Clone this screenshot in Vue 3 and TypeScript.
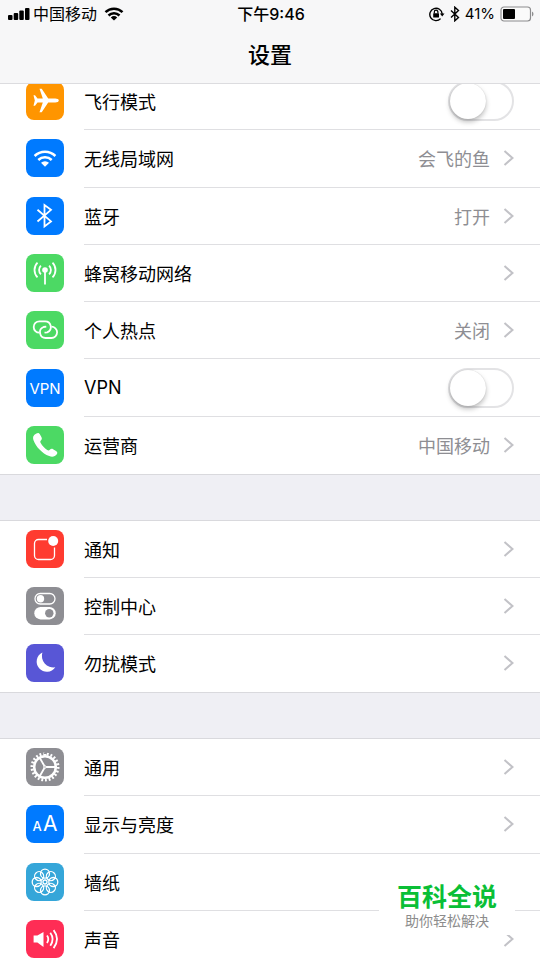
<script setup lang="ts">
import { ref } from 'vue'

interface Item {
  id: string
  label: string
  color: string
  value?: string
  toggle?: boolean
}

const groups: Item[][] = [
  [
    { id: 'plane', label: '飞行模式', color: 'orange', toggle: true },
    { id: 'wifi', label: '无线局域网', color: 'blue', value: '会飞的鱼' },
    { id: 'bluetooth', label: '蓝牙', color: 'blue', value: '打开' },
    { id: 'cellular', label: '蜂窝移动网络', color: 'green' },
    { id: 'hotspot', label: '个人热点', color: 'green', value: '关闭' },
    { id: 'vpn', label: 'VPN', color: 'blue', toggle: true },
    { id: 'phone', label: '运营商', color: 'green', value: '中国移动' },
  ],
  [
    { id: 'notify', label: '通知', color: 'red' },
    { id: 'control', label: '控制中心', color: 'gray' },
    { id: 'moon', label: '勿扰模式', color: 'indigo' },
  ],
  [
    { id: 'gear', label: '通用', color: 'gray' },
    { id: 'display', label: '显示与亮度', color: 'blue' },
    { id: 'wallpaper', label: '墙纸', color: 'cyan' },
    { id: 'sound', label: '声音', color: 'pink' },
  ],
]

const switches = ref<Record<string, boolean>>({ plane: false, vpn: false })
const petals = [0, 45, 90, 135, 180, 225, 270, 315]
</script>

<template>
  <div class="screen">
    <header class="header">
      <div class="status">
        <div class="status-left">
          <svg class="signal" viewBox="0 0 22 14" width="22" height="14" aria-hidden="true">
            <rect x="0" y="8" width="4.500" height="5" rx="1" />
            <rect x="5.700" y="6" width="4.500" height="7" rx="1" />
            <rect x="11.300" y="3.500" width="4.500" height="9.500" rx="1" />
            <rect x="17" y="1" width="4.500" height="12" rx="1" />
          </svg>
          <span>中国移动</span>
          <svg class="status-wifi" viewBox="0 0 20 14" width="20" height="14" aria-hidden="true">
            <path d="M1.500 5.200a12.200 12.200 0 0 1 17 0M4.500 8.500a8 8 0 0 1 11 0" fill="none" stroke="#000" stroke-width="2.500" />
            <path d="M6.800 10.400a4.700 4.700 0 0 1 6.400 0L10 13.600z" />
          </svg>
        </div>
        <time class="time">下午9:46</time>
        <div class="status-right">
          <svg class="status-lock" viewBox="0 0 16 16" width="16" height="16" aria-hidden="true">
            <path d="M11.600 12.600A6.200 6.200 0 1 1 13.200 8" fill="none" stroke="#000" stroke-width="1.400" />
            <path d="M10.900 7.400h4.600l-2.300 3.200z" />
            <rect x="4.200" y="7.200" width="5.800" height="4.300" rx=".6" />
            <path d="M5.300 7.500V6a1.800 1.800 0 0 1 3.600 0v1.500" fill="none" stroke="#000" stroke-width="1.200" />
          </svg>
          <svg viewBox="0 0 10 16" width="10" height="16" aria-hidden="true">
            <path d="M1 4.500l7.500 7-3.700 3.300V1.200l3.700 3.300-7.500 7" fill="none" stroke="#000" stroke-width="1.400" />
          </svg>
          <span class="percent">41%</span>
          <svg viewBox="0 0 34 16" width="34" height="16" aria-hidden="true">
            <rect x="1" y="1" width="29.500" height="14" rx="3" fill="#fafafa" stroke="#8c8c8e" stroke-width="1.200" />
            <rect x="3" y="3" width="12" height="10" rx="1" />
            <path d="M32 5.500v5q1.500-.8 1.500-2.500T32 5.500z" fill="#8c8c8e" />
          </svg>
        </div>
      </div>
      <h1 class="title">设置</h1>
    </header>

    <main class="content">
      <div class="list">
        <section v-for="(group, g) in groups" :key="g" class="group" :class="'rows-' + group.length">
          <component
            :is="item.toggle ? 'label' : 'a'"
            v-for="item in group"
            :key="item.id"
            class="row"
            :href="item.toggle ? undefined : '#' + item.id"
            :for="item.toggle ? 'switch-' + item.id : undefined"
          >
            <svg class="icon" :class="item.color" viewBox="0 0 38 38" aria-hidden="true">
              <path
                v-if="item.id === 'plane'"
                class="solid"
                d="M32.800 18.500c0 1.200-1.600 1.900-3.600 1.900h-7L15.700 30.200h-2.200l3.300-9.800h-5.300l-2.500 3.400H7.500l1.300-5.300-1.300-5.300H9l2.500 3.400h5.300L13.500 6.800h2.200l6.500 9.800h7c2 0 3.600.7 3.600 1.900z"
              />
              <g v-else-if="item.id === 'wifi'">
                <path class="line thick" d="M8.600 17a15 15 0 0 1 20.800 0M12.300 21a9.600 9.600 0 0 1 13.400 0" />
                <path class="solid" d="M15 23.800a5.700 5.700 0 0 1 8 0l-4 4z" />
              </g>
              <path
                v-else-if="item.id === 'bluetooth'"
                class="line mid"
                d="M11.500 12.800l13.500 11.600-6.500 5V8l6.500 4.900-13.500 11.600"
              />
              <g v-else-if="item.id === 'cellular'">
                <circle class="solid" cx="19" cy="16" r="2.800" />
                <path class="line mid" d="M19 17v13.500M14.900 11.700a6 6 0 0 0 0 8.600M23.100 11.700a6 6 0 0 1 0 8.600M11.500 8.700a10.400 10.400 0 0 0 0 14.600M26.500 8.700a10.400 10.400 0 0 1 0 14.600" />
              </g>
              <g v-else-if="item.id === 'hotspot'" class="line mid">
                <path d="M13.400 21.700a5.700 5.700 0 0 1 0-11.400h5.600a5.700 5.700 0 0 1 2.200 11l-2.700.4" />
                <path d="M25.400 15.600a5.700 5.700 0 0 1 0 11.400h-5.600a5.700 5.700 0 0 1-2.200-11l2.700-.4" />
              </g>
              <text v-else-if="item.id === 'vpn'" class="vpn-text" x="19" y="24.500" text-anchor="middle">VPN</text>
              <path
                v-else-if="item.id === 'phone'"
                class="solid"
                d="M10.400 7.600c1.600-1.100 2.700-.6 3.600.9l1.500 2.800c.7 1.300.3 2.300-.6 3.200-.8.8-.7 1.600-.2 2.500 1.500 2.700 3.700 5 6.500 6.900 1 .6 1.800.8 2.600-.1 1-1.100 2-1.400 3.300-.6l2.900 1.700c1.400.9 1.800 1.900.8 3.300-1.700 2.400-4.400 3.200-7.600 1.900C16.100 27.300 9.900 21 7.400 14c-.9-2.700-.2-4.900 3-6.400z"
              />
              <g v-else-if="item.id === 'notify'">
                <path class="line fine" d="M21 9.500h-8.500a4 4 0 0 0-4 4v12a4 4 0 0 0 4 4h12a4 4 0 0 0 4-4v-8" />
                <circle class="solid" cx="27.200" cy="11" r="5" />
              </g>
              <g v-else-if="item.id === 'control'">
                <rect class="line fine" x="9" y="6.500" width="20" height="10.500" rx="5.250" />
                <circle class="solid" cx="14.500" cy="11.750" r="3.700" />
                <rect class="solid" x="8.300" y="20" width="21.400" height="12.400" rx="6.200" />
                <circle class="dot" cx="23.300" cy="26.200" r="4.200" />
              </g>
              <path
                v-else-if="item.id === 'moon'"
                class="solid"
                d="M16.400 8.400a11.600 11.600 0 0 0 12.900 14.900A10.200 10.200 0 1 1 16.400 8.400z"
              />
              <g v-else-if="item.id === 'gear'" class="line">
                <circle class="teeth" cx="19" cy="19" r="13" pathLength="44" />
                <circle class="thick" cx="19" cy="19" r="10.800" />
                <path class="mid" d="M19 19h11M19 19l-5.600-9.700M19 19l-5.600 9.700" />
                <circle class="hub" cx="19" cy="19" r="1.200" />
              </g>
              <g v-else-if="item.id === 'display'" class="display-text">
                <text class="small-a" x="6.500" y="25.500">A</text>
                <text class="big-a" x="17" y="25.500">A</text>
              </g>
              <g v-else-if="item.id === 'wallpaper'" class="line fine">
                <circle
                  v-for="angle in petals"
                  :key="angle"
                  cx="19"
                  cy="10.700"
                  r="4.500"
                  :transform="`rotate(${angle} 19 19)`"
                />
                <circle cx="19" cy="19" r="2" />
              </g>
              <g v-else>
                <path class="solid" d="M7.600 15.500h3.800L17.500 12v15l-6.100-4.500H7.600z" />
                <path class="line mid" d="M21 15.500q2.600 3.500 0 7.500M24.300 12.700q4.600 6.300 0 13M27.600 10.100q6.800 8.800 0 18" />
              </g>
            </svg>
            <span class="body">
              <span class="label">{{ item.label }}</span>
              <input
                v-if="item.toggle"
                :id="'switch-' + item.id"
                v-model="switches[item.id]"
                class="switch"
                type="checkbox"
                role="switch"
              />
              <template v-else>
                <span v-if="item.value" class="value">{{ item.value }}</span>
                <svg class="chevron" viewBox="0 0 12 16" width="12" height="16" aria-hidden="true">
                  <path d="M2.500 1l8 7-8 7" />
                </svg>
              </template>
            </span>
          </component>
        </section>
      </div>
    </main>

    <aside class="badge">
      <strong class="badge-name">百科全说</strong>
      <span class="badge-note">助你轻松解决</span>
    </aside>
  </div>
</template>

<style>
body {
  margin: 0;
  background: #efeff4;
}
</style>

<style scoped>
.screen {
  position: relative;
  display: flex;
  flex-direction: column;
  height: 100vh;
  overflow: hidden;
  background: #efeff4;
  color: #000;
  font-family: Inter, "Noto Sans CJK SC", sans-serif;
}

.header {
  flex: none;
  background: #f7f7f8;
  border-bottom: 1px solid #dcdcdf;
}

.status {
  display: grid;
  grid-template-columns: 1fr auto 1fr;
  align-items: center;
  height: 28px;
  padding: 0 6px 0 8px;
  font-size: 16px;
  line-height: 28px;
}

.status-left,
.status-right {
  display: flex;
  align-items: center;
}

.status-left {
  gap: 3px;
}

.status-wifi {
  margin-left: 4px;
}

.status-right {
  justify-content: flex-end;
  gap: 5px;
}

.percent {
  font-size: 15px;
}

.time {
  font-weight: 500;
}

.title {
  margin: 0;
  font-size: 22px;
  font-weight: 500;
  line-height: 55px;
  text-align: center;
}

.content {
  flex: 1;
  min-height: 0;
  overflow: hidden;
}

/* The list is scrolled slightly, so its first row runs under the header. */
.list {
  display: flex;
  flex-direction: column;
  gap: 45px;
  margin-top: -12px;
}

.group {
  display: grid;
  grid-auto-rows: 1fr;
  background: #fff;
  border-top: 1px solid #d9d9dd;
  border-bottom: 1px solid #d9d9dd;
}

.rows-7 {
  min-height: 401px;
}

.rows-3 {
  min-height: 171px;
}

.rows-4 {
  min-height: 229px;
}

.row {
  display: flex;
  align-items: stretch;
  gap: 20px;
  padding-left: 26px;
  color: inherit;
  text-decoration: none;
}

.icon {
  flex: none;
  align-self: center;
  width: 38px;
  height: 38px;
  margin-bottom: 1px;
  border-radius: 8px;
}

.body {
  flex: 1;
  display: flex;
  align-items: center;
  padding-right: 26px;
  border-bottom: 1px solid #dfdfe2;
}

.row:last-child .body {
  border-bottom-color: transparent;
}

.label {
  flex: 1;
  font-size: 18px;
}

.value {
  margin-right: 12px;
  color: #8e8e93;
  font-size: 18px;
}

.chevron {
  fill: none;
  stroke: #c2c2c7;
  stroke-width: 2;
}

.switch {
  appearance: none;
  box-sizing: border-box;
  width: 66px;
  height: 40px;
  margin: 0;
  border: 2px solid #e3e3e5;
  border-radius: 20px;
  background: #fff;
}

.switch::before {
  content: "";
  display: block;
  width: 36px;
  height: 36px;
  border-radius: 50%;
  background: #fff;
  box-shadow: 0 3px 5px rgba(0, 0, 0, 0.25), 0 0 1px rgba(0, 0, 0, 0.2);
}

.switch:checked {
  background: #4cd964;
}

.switch:checked::before {
  margin-left: 26px;
}

.orange { background: #ff9500; }
.blue { background: #007aff; }
.green { background: #4cd964; }
.red { background: #ff3b30; }
.gray { background: #8e8e93; }
.indigo { background: #5856d6; }
.cyan { background: #35a6d9; }
.pink { background: #ff2d55; }

.solid {
  fill: #fff;
}

.line {
  fill: none;
  stroke: #fff;
}

.fine {
  stroke-width: 1.3;
}

.mid {
  stroke-width: 1.8;
}

.thick {
  stroke-width: 2.5;
}

.dot,
.hub {
  fill: #8e8e93;
}

.teeth {
  stroke-width: 3;
  stroke-dasharray: 1 1;
}

.vpn-text,
.display-text {
  fill: #fff;
}

.vpn-text {
  font-size: 15px;
}

.small-a {
  font-size: 13px;
  font-weight: 500;
}

.big-a {
  font-size: 21px;
}

.badge {
  position: absolute;
  right: 25px;
  bottom: 25px;
  box-sizing: border-box;
  display: flex;
  flex-direction: column;
  align-items: center;
  width: 136px;
  height: 66px;
  padding-top: 10px;
  background: #fff;
}

.badge-name {
  color: #0abf36;
  font-size: 25px;
  font-weight: 700;
  line-height: 36px;
}

.badge-note {
  color: #8c8c8c;
  font-size: 14px;
  line-height: 12px;
}
</style>
